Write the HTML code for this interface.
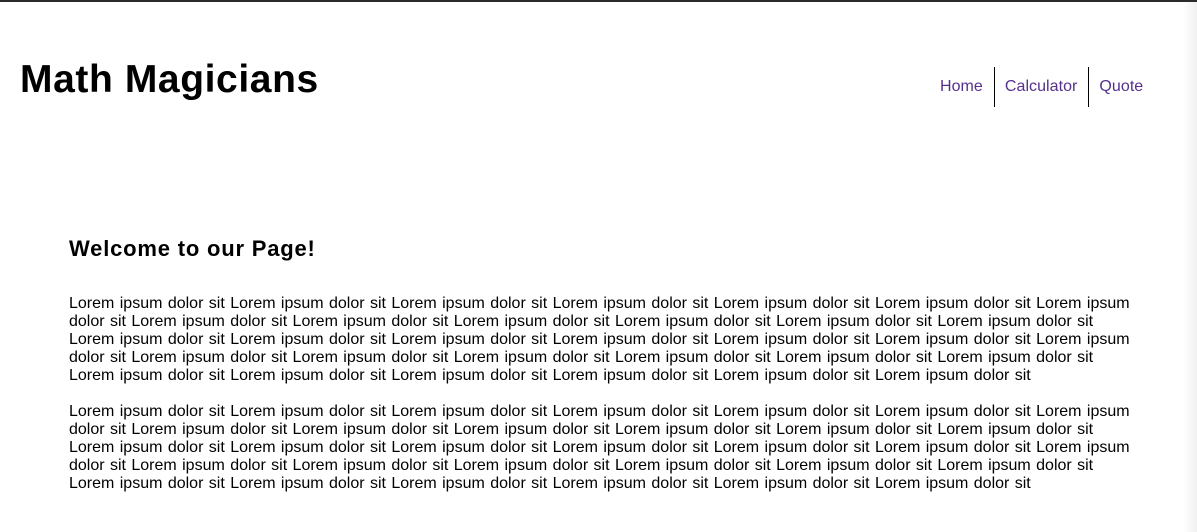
<!DOCTYPE html>
<html><head><style>
html,body{margin:0;padding:0;background:#fff;}
body{width:1197px;height:530px;overflow:hidden;position:relative;font-family:"Liberation Sans",sans-serif;color:#000;border-top:2px solid #2b2b2b;box-sizing:border-box;}
.sb{position:absolute;right:0;top:0;width:14px;height:530px;background:linear-gradient(to right,#fff,#f1f1f1);}
h1{position:absolute;left:20px;top:54px;margin:0;font-size:39px;font-weight:bold;line-height:48px;letter-spacing:0.6px;}
nav{position:absolute;top:65px;left:930px;height:40px;display:flex;}
nav a{color:#55308d;text-decoration:none;font-size:16px;line-height:40px;padding:0 11px 0 10px;letter-spacing:0.05px;}
nav a+a{border-left:1.5px solid #000;}
h2{position:absolute;left:69px;top:233px;margin:0;font-size:22px;font-weight:bold;line-height:28px;letter-spacing:0.8px;}
.p{position:absolute;left:69px;font-size:16px;line-height:18px;white-space:nowrap;word-spacing:0.95px;}
</style></head><body>
<div class="sb"></div>
<h1>Math Magicians</h1>
<nav><a>Home</a><a>Calculator</a><a>Quote</a></nav>
<h2>Welcome to our Page!</h2>
<div class="p" style="top:293px">
Lorem ipsum dolor sit Lorem ipsum dolor sit Lorem ipsum dolor sit Lorem ipsum dolor sit Lorem ipsum dolor sit Lorem ipsum dolor sit Lorem ipsum<br>
dolor sit Lorem ipsum dolor sit Lorem ipsum dolor sit Lorem ipsum dolor sit Lorem ipsum dolor sit Lorem ipsum dolor sit Lorem ipsum dolor sit<br>
Lorem ipsum dolor sit Lorem ipsum dolor sit Lorem ipsum dolor sit Lorem ipsum dolor sit Lorem ipsum dolor sit Lorem ipsum dolor sit Lorem ipsum<br>
dolor sit Lorem ipsum dolor sit Lorem ipsum dolor sit Lorem ipsum dolor sit Lorem ipsum dolor sit Lorem ipsum dolor sit Lorem ipsum dolor sit<br>
Lorem ipsum dolor sit Lorem ipsum dolor sit Lorem ipsum dolor sit Lorem ipsum dolor sit Lorem ipsum dolor sit Lorem ipsum dolor sit
</div>
<div class="p" style="top:401px">
Lorem ipsum dolor sit Lorem ipsum dolor sit Lorem ipsum dolor sit Lorem ipsum dolor sit Lorem ipsum dolor sit Lorem ipsum dolor sit Lorem ipsum<br>
dolor sit Lorem ipsum dolor sit Lorem ipsum dolor sit Lorem ipsum dolor sit Lorem ipsum dolor sit Lorem ipsum dolor sit Lorem ipsum dolor sit<br>
Lorem ipsum dolor sit Lorem ipsum dolor sit Lorem ipsum dolor sit Lorem ipsum dolor sit Lorem ipsum dolor sit Lorem ipsum dolor sit Lorem ipsum<br>
dolor sit Lorem ipsum dolor sit Lorem ipsum dolor sit Lorem ipsum dolor sit Lorem ipsum dolor sit Lorem ipsum dolor sit Lorem ipsum dolor sit<br>
Lorem ipsum dolor sit Lorem ipsum dolor sit Lorem ipsum dolor sit Lorem ipsum dolor sit Lorem ipsum dolor sit Lorem ipsum dolor sit
</div>
</body></html>
